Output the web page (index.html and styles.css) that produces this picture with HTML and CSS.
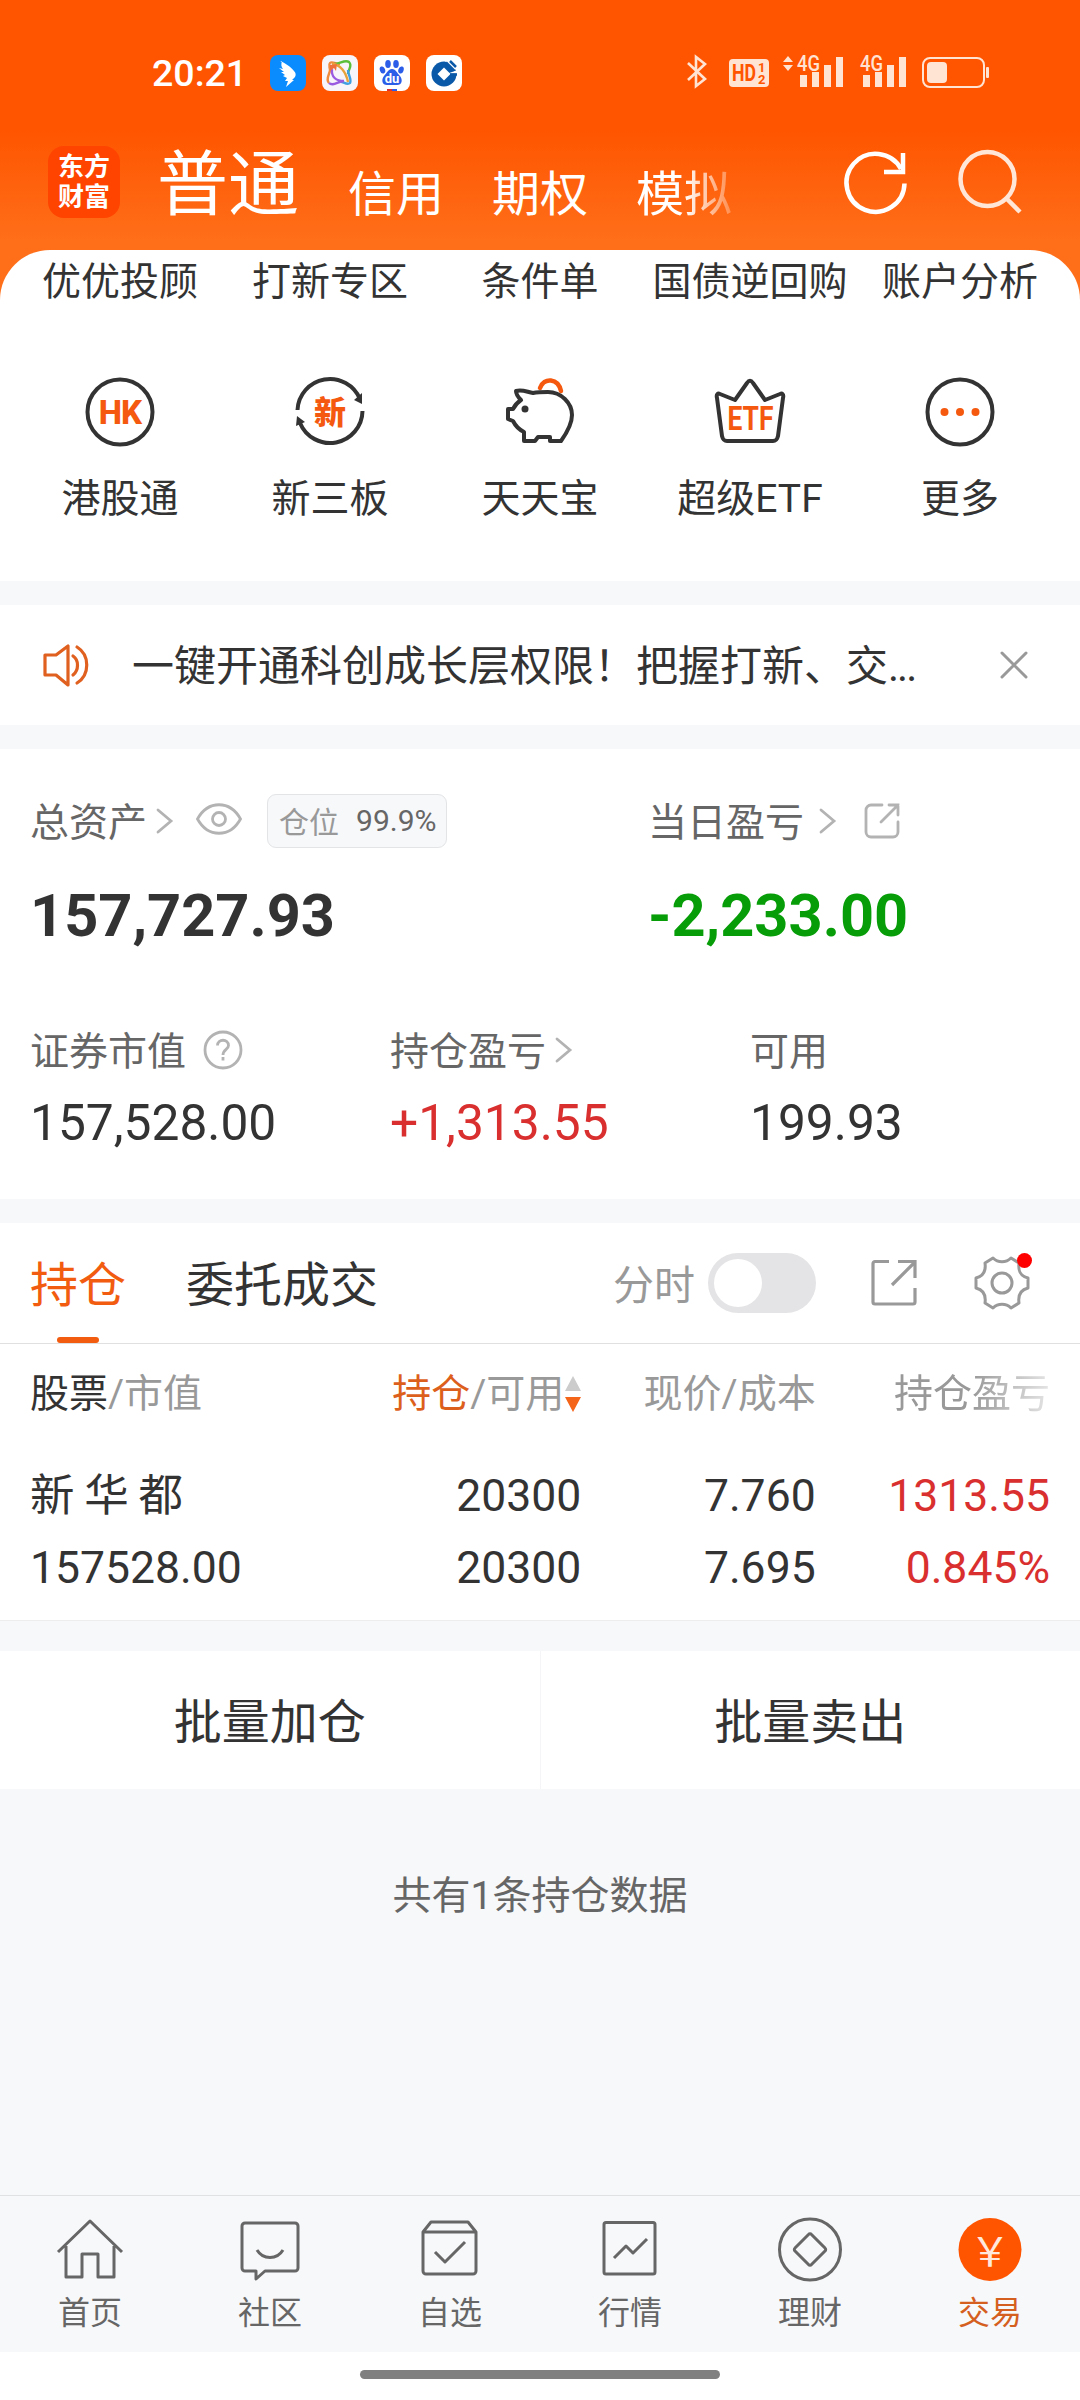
FILE: index.html
```html
<!DOCTYPE html>
<html lang="zh-CN">
<head>
    <meta charset="UTF-8">
    <meta name="viewport" content="width=device-width, initial-scale=1.0">
    <title>交易</title>
    <link rel="stylesheet" href="styles.css">
</head>
<body>
    <div class="header">
        <!-- 状态栏 -->
        <div class="status-bar">
            <span class="time">20:21</span>
            <div class="app-icons">
                <svg width="36" height="36" viewBox="0 0 36 36">
                    <rect width="36" height="36" rx="8" fill="#0a8cff"/>
                    <path d="M10 6c5 2 11 6 14 10 2 2 2 4 1 6l-3 3h2l-8 7 2-6h-3l2-3-4-2 2-1-4-3 3 0-5-4 4 1c-2-2-2-5-1-8z" fill="#fff"/>
                </svg>
                <svg width="36" height="36" viewBox="0 0 36 36" fill="none" stroke-width="2.4">
                    <rect width="36" height="36" rx="8" fill="#f7f5fa"/>
                    <path d="M7 28c-4-4 1-9 1-13 0-3-2-5 0-7s5 1 10 1" stroke="#f08a3c"/>
                    <path d="M12 9c6 0 11-5 15-2 4 4-1 7-1 12" stroke="#5cbf3a"/>
                    <path d="M10 9c8 0 14 8 16 18" stroke="#e8a23a"/>
                    <path d="M26 15c0 5 4 9 2 13-3 3-7-2-12-2" stroke="#3f9fe0"/>
                    <path d="M10 14c-1 8 4 12 12 12M22 26c-6 0-11 6-15 2" stroke="#9a5be0"/>
                    <path d="M8 10l7-1-1 7-2-3-4 3z" fill="#f0703c"/>
                </svg>
                <svg width="36" height="36" viewBox="0 0 36 36">
                    <rect width="36" height="36" rx="8" fill="#fff"/>
                    <g fill="#2b5de8">
                        <ellipse cx="14" cy="9" rx="2.8" ry="4"/>
                        <ellipse cx="22" cy="9" rx="2.8" ry="4"/>
                        <ellipse cx="8.5" cy="15" rx="2.6" ry="3.6" transform="rotate(-20 8.5 15)"/>
                        <ellipse cx="27" cy="15" rx="2.6" ry="3.6" transform="rotate(20 27 15)"/>
                        <path d="M18 14c4 0 5 4 8 7 3 4 2 9-3 9H13c-5 0-6-5-3-9 3-3 4-7 8-7z"/>
                    </g>
                    <text x="18" y="28" text-anchor="middle" class="du">du</text>
                    <path d="M13 35h5" stroke="#e03030" stroke-width="2"/>
                    <path d="M18 35h5" stroke="#2b5de8" stroke-width="2"/>
                </svg>
                <svg width="36" height="36" viewBox="0 0 36 36">
                    <rect width="36" height="36" rx="8" fill="#fff"/>
                    <circle cx="18" cy="19" r="12.5" fill="#0a59a8"/>
                    <path d="M18 12.5l6.500 6.500-6.500 6.500-6.500-6.500z" fill="#fff"/>
                    <path d="M22 18.500h11v-4h-5L19 6h9l6 8" fill="#fff"/>
                    <path d="M20 7.500l8 8M24 6l6 6" stroke="#0a59a8" stroke-width="2.500"/>
                    <path d="M24 19.500h7" stroke="#0a59a8" stroke-width="2.500"/>
                </svg>
            </div>
            <svg class="system-icons" width="306" height="48" viewBox="0 -6 306 48" fill="#ffe3d3">
                <path d="M2 9l17 16-9 7V3l9 7L2 26" fill="none" stroke="#ffe3d3" stroke-width="2.600"/>
                <rect x="43" y="5" width="40" height="28" rx="4"/>
                <text x="46" y="27" class="hd" textLength="24" lengthAdjust="spacingAndGlyphs">HD</text>
                <text x="72" y="18" class="hd-num">1</text>
                <text x="72" y="30" class="hd-num">2</text>
                <path d="M97 8l5-6 5 6zM97 11l5 6 5-6z"/>
                <text x="111" y="17" class="net" textLength="23" lengthAdjust="spacingAndGlyphs">4G</text>
                <path d="M114 21h7v12h-7zM126 18h7v15h-7zM138 11h7v22h-7zM150 3h7v30h-7z"/>
                <text x="174" y="17" class="net" textLength="23" lengthAdjust="spacingAndGlyphs">4G</text>
                <path d="M177 21h7v12h-7zM189 18h7v15h-7zM201 11h7v22h-7zM213 3h7v30h-7z"/>
                <rect x="237" y="4" width="61" height="29" rx="7" fill="none" stroke="#ffe3d3" stroke-width="2"/>
                <rect x="241" y="8" width="20" height="21" rx="4"/>
                <rect x="300" y="13" width="3" height="11" rx="1"/>
            </svg>
        </div>

        <!-- 账户切换 -->
        <div class="account-nav">
            <div class="logo"><span>东方</span><span>财富</span></div>
            <div class="account-tabs">
                <span class="active">普通</span>
                <span>信用</span>
                <span>期权</span>
                <span class="fade">模拟</span>
            </div>
            <svg class="refresh" width="64" height="64" viewBox="0 0 64 64" fill="none" stroke="#fff" stroke-width="4.500">
                <path d="M60.500 32.500A29 29 0 1 1 57 18"/>
                <path d="M59 2v19H40"/>
            </svg>
            <svg class="search" width="64" height="64" viewBox="0 0 64 64" fill="none" stroke="#ffe6d6" stroke-width="4.500">
                <circle cx="29.500" cy="30" r="27"/>
                <path d="M48 49l14 14"/>
            </svg>
        </div>
    </div>

    <!-- 快捷入口 -->
    <div class="shortcuts">
        <div class="shortcut-row labels">
            <span>优优投顾</span>
            <span>打新专区</span>
            <span>条件单</span>
            <span>国债逆回购</span>
            <span>账户分析</span>
        </div>
        <div class="shortcut-row">
            <div class="shortcut">
                <svg width="76" height="76" viewBox="0 0 76 76">
                    <circle cx="38" cy="38" r="32.500" class="line"/>
                    <text x="38" y="50" text-anchor="middle" class="mark hk">HK</text>
                </svg>
                <span>港股通</span>
            </div>
            <div class="shortcut">
                <svg width="76" height="76" viewBox="0 0 76 76">
                    <path d="M5.500 36A32.500 32.500 0 0 1 68 25M70.500 37A32.500 32.500 0 0 1 8 49" class="line"/>
                    <path d="M70 19v11l-8-4zM5 42l-1 10 9-4z" fill="#333"/>
                    <text x="38" y="50" text-anchor="middle" class="mark xin">新</text>
                </svg>
                <span>新三板</span>
            </div>
            <div class="shortcut">
                <svg width="76" height="76" viewBox="0 0 76 76">
                    <path d="M38 14c4-11 18-10 21 3" fill="none" stroke="#f4590f" stroke-width="4.500" stroke-linecap="round"/>
                    <path d="M14 17c6-2 11 1 17 2 5-1 10-1 15-1 13 0 24 11 24 23 0 10-6 19-11 26H48v-4H36l-3 4H22v-9c-6-3-9-7-11-11l-5-2v-10h5c2-4 5-7 8-9-3-3-5-6-5-9z" class="line"/>
                    <circle cx="23" cy="35" r="3.500" fill="#333"/>
                </svg>
                <span>天天宝</span>
            </div>
            <div class="shortcut">
                <svg width="76" height="76" viewBox="0 0 76 76">
                    <path d="M5 24c-1-4 1-5 3-4l15 6 12-17c2-3 4-3 6 0l12 17 15-6c2-1 4 0 3 4l-5 38c-1 4-2 5-5 5H15c-3 0-4-1-5-5z" class="line"/>
                    <text x="15.500" y="55.500" textLength="46" lengthAdjust="spacingAndGlyphs" class="mark etf">ETF</text>
                </svg>
                <span>超级ETF</span>
            </div>
            <div class="shortcut">
                <svg width="76" height="76" viewBox="0 0 76 76">
                    <circle cx="38" cy="38" r="32.500" class="line"/>
                    <g fill="#f4590f">
                        <circle cx="22.500" cy="38" r="4"/>
                        <circle cx="38" cy="38" r="4"/>
                        <circle cx="53.500" cy="38" r="4"/>
                    </g>
                </svg>
                <span>更多</span>
            </div>
        </div>
    </div>

    <!-- 公告 -->
    <div class="notice">
        <svg width="48" height="44" viewBox="0 0 48 44" fill="none" stroke="#e0601f" stroke-width="3.200" stroke-linejoin="round" stroke-linecap="round">
            <path d="M3 12h11l12-9v39l-12-10H3z"/>
            <path d="M31 13c6 4 6 14 0 19M35 4c13 8 13 28 0 36"/>
        </svg>
        <p>一键开通科创成长层权限！把握打新、交<span class="dots">...</span></p>
        <svg width="28" height="28" viewBox="0 0 28 28" fill="none" stroke="#999" stroke-width="3" stroke-linecap="round">
            <path d="M2 2l24 24M26 2L2 26"/>
        </svg>
    </div>

    <!-- 资产 -->
    <div class="assets">
        <div class="asset-top">
            <div class="asset-main">
                <div class="label">
                    <span>总资产</span>
                    <svg class="chevron" width="17" height="26" viewBox="0 0 17 26"><path d="M2 2l13 11L2 24"/></svg>
                    <svg class="eye" width="46" height="32" viewBox="0 0 46 32" fill="none" stroke="#b3b3b3" stroke-width="2.800">
                        <path d="M1.500 16C12-3 34-3 44.500 16 34 35 12 35 1.500 16z"/>
                        <circle cx="23" cy="16" r="6.500"/>
                    </svg>
                    <div class="ratio">仓位<b>99.9%</b></div>
                </div>
                <div class="total">157,727.93</div>
            </div>
            <div class="asset-today">
                <div class="label">
                    <span>当日盈亏</span>
                    <svg class="chevron wide" width="17" height="26" viewBox="0 0 17 26"><path d="M2 2l13 11L2 24"/></svg>
                    <svg class="share" width="36" height="36" viewBox="0 0 36 36" fill="none" stroke="#b3b3b3" stroke-width="2.800" stroke-linecap="round">
                        <path d="M18 2H7a5 5 0 0 0-5 5v22a5 5 0 0 0 5 5h22a5 5 0 0 0 5-5V19"/>
                        <path d="M25 2h9v10M34 2L17 19"/>
                    </svg>
                </div>
                <div class="total down">-2,233.00</div>
            </div>
        </div>
        <div class="asset-bottom">
            <div>
                <div class="label">
                    <span>证券市值</span>
                    <svg class="help" width="40" height="40" viewBox="0 0 40 40" fill="none" stroke="#b3b3b3" stroke-width="2.800">
                        <circle cx="20" cy="20" r="18"/>
                        <path d="M14.500 15.500c0-7 11-7 11 0 0 4-5.500 4-5.500 9.500M20 27v3.500"/>
                    </svg>
                </div>
                <div class="value">157,528.00</div>
            </div>
            <div>
                <div class="label">
                    <span>持仓盈亏</span>
                    <svg class="chevron" width="17" height="26" viewBox="0 0 17 26"><path d="M2 2l13 11L2 24"/></svg>
                </div>
                <div class="value up">+1,313.55</div>
            </div>
            <div>
                <div class="label"><span>可用</span></div>
                <div class="value">199.93</div>
            </div>
        </div>
    </div>

    <!-- 持仓列表 -->
    <div class="positions">
        <div class="position-tabs">
            <span class="tab active">持仓</span>
            <span class="tab">委托成交</span>
            <span class="switch-label">分时</span>
            <span class="switch"></span>
            <svg class="export" width="48" height="48" viewBox="0 0 48 48" fill="none" stroke="#999" stroke-width="3.200">
                <path d="M19 2.500H5a2 2 0 0 0-2 2V43a2 2 0 0 0 2 2h38a2 2 0 0 0 2-2V29"/>
                <path d="M28 2.500h17V19M44 4L22 26"/>
            </svg>
            <div class="settings">
                <svg width="56" height="56" viewBox="0 0 56 56" fill="none" stroke="#999" stroke-width="3" stroke-linejoin="round">
                    <path d="M19 3c5 5 13 5 18 0l8 5c-1 8 1 13 9 15v10c-8 2-10 8-9 15l-8 5c-5-5-13-5-18 0l-8-5c1-7-1-13-9-15V23c8-2 10-8 9-15z"/>
                    <circle cx="28" cy="28" r="10"/>
                </svg>
                <i class="dot"></i>
            </div>
        </div>
        <table>
            <thead>
                <tr>
                    <th><b>股票</b>/市值</th>
                    <th class="sorted"><em>持仓</em>/可用<svg width="16" height="36" viewBox="0 0 16 36"><path d="M8 0l8 15H0z" fill="#ccc"/><path d="M8 36l8-15H0z" fill="#f4651a"/></svg></th>
                    <th>现价/成本</th>
                    <th><span class="fade">持仓盈亏</span></th>
                </tr>
            </thead>
            <tbody>
                <tr>
                    <td>新 华 都<br>157528.00</td>
                    <td>20300<br>20300</td>
                    <td>7.760<br>7.695</td>
                    <td class="up">1313.55<br>0.845%</td>
                </tr>
            </tbody>
        </table>
    </div>

    <div class="batch">
        <div>批量加仓</div>
        <div>批量卖出</div>
    </div>
    <p class="summary">共有1条持仓数据</p>

    <!-- 底部导航 -->
    <div class="tab-bar">
        <div class="tab-item">
            <svg width="66" height="66" viewBox="0 0 66 66">
                <path d="M1 34L33 3l32 31M9 28v31h16V36h16v23h16V28"/>
            </svg>
            <span>首页</span>
        </div>
        <div class="tab-item">
            <svg width="66" height="66" viewBox="0 0 66 66">
                <path d="M8 5h50a3 3 0 0 1 3 3v42a3 3 0 0 1-3 3H28l-9 8v-8H8a3 3 0 0 1-3-3V8a3 3 0 0 1 3-3z"/>
                <path d="M20 32c6 10 20 10 26 0"/>
            </svg>
            <span>社区</span>
        </div>
        <div class="tab-item">
            <svg width="66" height="66" viewBox="0 0 66 66">
                <path d="M6 14l8-10h37l8 10v39a3 3 0 0 1-3 3H9a3 3 0 0 1-3-3zM6 14h53M18 34l10 10 20-20"/>
            </svg>
            <span>自选</span>
        </div>
        <div class="tab-item">
            <svg width="66" height="66" viewBox="0 0 66 66">
                <rect x="7" y="4.500" width="51" height="51.500" rx="2"/>
                <path d="M17 40l12-12 7 7 14-14"/>
            </svg>
            <span>行情</span>
        </div>
        <div class="tab-item">
            <svg width="66" height="66" viewBox="0 0 66 66">
                <circle cx="33" cy="31.500" r="30.500"/>
                <path d="M31.500 16.500a2 2 0 0 1 3 0l13.500 13.500a2 2 0 0 1 0 3L34.500 46.500a2 2 0 0 1-3 0L18 33a2 2 0 0 1 0-3z"/>
            </svg>
            <span>理财</span>
        </div>
        <div class="tab-item active">
            <svg width="66" height="66" viewBox="0 0 66 66">
                <circle cx="33" cy="31.500" r="31.500"/>
                <text x="33" y="48" text-anchor="middle">￥</text>
            </svg>
            <span>交易</span>
        </div>
    </div>
    <div class="home-indicator"></div>
</body>
</html>
```

FILE: styles.css
```css
* {
    box-sizing: border-box;
    margin: 0;
    padding: 0;
}
body {
    display: flex;
    flex-direction: column;
    width: 1080px;
    height: 2400px;
    overflow: hidden;
    font-family: Roboto, "Noto Sans CJK SC", sans-serif;
    background-color: #f7f8fa;
    color: #333;
}
svg {
    display: block;
    flex-shrink: 0;
    overflow: visible;
}
b, em, i, th {
    font-weight: normal;
    font-style: normal;
}

/* 顶部 */
.header {
    flex-shrink: 0;
    height: 310px;
    margin-bottom: -60px;
    background: linear-gradient(#ff5500 130px, #ff6e19 240px);
    color: #fff;
}
.status-bar {
    display: flex;
    align-items: center;
    height: 145px;
    padding: 0 88px 0 152px;
}
.time {
    width: 118px;
    font-size: 37.5px;
    font-weight: 500;
}
.app-icons {
    display: flex;
    gap: 16px;
}
.system-icons {
    margin: 0 0 2px auto;
}
.du {
    font-size: 13px;
    font-weight: bold;
    fill: #fff;
}
.hd {
    font-size: 24px;
    font-weight: 700;
    fill: #ff5500;
}
.hd-num {
    font-size: 13px;
    font-weight: 700;
    fill: #ff5500;
}
.net {
    font-size: 22px;
    font-weight: 500;
}
.account-nav {
    display: flex;
    height: 105px;
    padding-left: 48px;
}
.logo {
    display: flex;
    flex-direction: column;
    width: 72px;
    height: 72px;
    margin-top: 1px;
    padding-top: 6px;
    border-radius: 16px;
    background-color: #ff4400;
    font-size: 26px;
    font-weight: 700;
    line-height: 30px;
    text-align: center;
}
.account-tabs {
    display: flex;
    align-items: flex-start;
    gap: 48px;
    width: 640px;
    margin-left: 37px;
    font-size: 48px;
    line-height: 100px;
}
.account-tabs .active {
    font-size: 71px;
    line-height: 80px;
    margin-right: 1px;
}
.fade {
    -webkit-mask-image: linear-gradient(90deg, #000 50%, rgba(0, 0, 0, 0.25));
    mask-image: linear-gradient(90deg, #000 50%, rgba(0, 0, 0, 0.25));
}
.refresh {
    margin: 6px 0 0 47px;
}
.search {
    margin: 4px 0 0 50px;
}

/* 快捷入口 */
.shortcuts {
    flex-shrink: 0;
    height: 331px;
    padding: 0 15px;
    border-radius: 50px 50px 0 0;
    background-color: #fff;
    font-size: 39px;
}
.shortcut-row {
    display: grid;
    grid-template-columns: repeat(5, 210px);
    text-align: center;
    white-space: nowrap;
}
.labels {
    height: 124px;
    line-height: 64px;
}
.labels span {
    justify-self: center;
}
.shortcut {
    display: flex;
    flex-direction: column;
    align-items: center;
    gap: 23px;
    line-height: 52px;
}
.line {
    fill: none;
    stroke: #333;
    stroke-width: 4;
    stroke-linejoin: round;
}
.mark {
    font-weight: 700;
    fill: #f4590f;
}
.hk {
    font-size: 33px;
    font-weight: 800;
    letter-spacing: -1px;
}
.xin {
    font-size: 32px;
    font-weight: 900;
}
.etf {
    font-size: 34px;
}

/* 公告 */
.notice {
    display: flex;
    flex-shrink: 0;
    align-items: center;
    height: 120px;
    margin-top: 24px;
    padding: 0 52px 0 42px;
    background-color: #fff;
}
.notice p {
    flex: 1;
    margin-left: 42px;
    padding-top: 4px;
    font-size: 42px;
    line-height: 60px;
    white-space: nowrap;
}
.dots {
    letter-spacing: -2px;
}

/* 资产 */
.assets {
    flex-shrink: 0;
    height: 450px;
    margin-top: 24px;
    padding: 45px 30px 0;
    background-color: #fff;
}
.asset-top {
    display: flex;
    height: 229px;
}
.asset-main {
    width: 618px;
}
.label {
    display: flex;
    align-items: center;
    height: 54px;
    font-size: 39px;
    color: #666;
}
.label > span {
    padding-bottom: 4px;
}
.chevron {
    margin-left: 9px;
    fill: none;
    stroke: #b3b3b3;
    stroke-width: 2.8;
    stroke-linecap: round;
}
.chevron.wide {
    margin-left: 15px;
}
.eye {
    margin: 0 0 4px 23px;
}
.ratio {
    display: flex;
    align-items: center;
    gap: 17px;
    width: 180px;
    height: 54px;
    margin-left: 25px;
    padding: 0 0 2px 11px;
    border: 1px solid #e3e4e6;
    border-radius: 9px;
    background-color: #f7f8fa;
    color: #999;
    font-size: 30px;
}
.ratio b {
    color: #666;
}
.share {
    margin-left: 28px;
}
.total {
    margin-top: 32px;
    font-size: 59.5px;
    font-weight: 700;
    line-height: 72px;
}
.asset-bottom {
    display: flex;
}
.asset-bottom > div {
    flex: 0 0 360px;
}
.asset-bottom > div:last-child {
    flex: 1;
}
.help {
    margin-left: 17px;
}
.value {
    margin-top: 16px;
    font-size: 49.7px;
    line-height: 60px;
}
.up {
    color: #d9302f;
}
.down {
    color: #079d08;
}

/* 持仓列表 */
.positions {
    flex-shrink: 0;
    height: 398px;
    margin-top: 24px;
    border-bottom: 1px solid #ededee;
    background-color: #fff;
}
.position-tabs {
    display: flex;
    align-items: center;
    height: 121px;
    padding: 0 50px 0 30px;
    border-bottom: 1px solid #e0e0e0;
}
.tab {
    position: relative;
    margin-right: 60px;
    padding-bottom: 5px;
    font-size: 48px;
}
.tab.active {
    color: #f25c10;
}
.tab.active::after {
    content: "";
    position: absolute;
    left: 27px;
    bottom: -22px;
    width: 42px;
    height: 6px;
    border-radius: 3px;
    background-color: #f25c10;
}
.switch-label {
    margin-left: auto;
    padding-bottom: 2px;
    color: #999;
    font-size: 41px;
}
.switch {
    width: 108px;
    height: 60px;
    margin-left: 13px;
    padding: 6px;
    border-radius: 30px;
    background-color: #e4e4e6;
}
.switch::before {
    content: "";
    display: block;
    width: 48px;
    height: 48px;
    border-radius: 50%;
    background-color: #fff;
}
.export {
    margin-left: 54px;
}
.settings {
    position: relative;
    margin-left: 56px;
}
.dot {
    position: absolute;
    top: -2px;
    right: -2px;
    width: 15px;
    height: 15px;
    border-radius: 50%;
    background-color: #f00;
}
table {
    width: 1020px;
    margin: 0 30px;
    border-collapse: collapse;
    table-layout: fixed;
}
th {
    height: 98px;
    padding-bottom: 6px;
    color: #999;
    font-size: 39px;
    text-align: right;
    white-space: nowrap;
}
th:first-child, td:first-child {
    width: 317px;
    text-align: left;
}
th b {
    color: #333;
}
th em {
    color: #dd5f1c;
}
.sorted svg {
    display: inline-block;
    margin-left: 1px;
    vertical-align: -5px;
}
th .fade {
    display: inline-block;
}
td {
    padding-top: 18px;
    font-size: 44.5px;
    line-height: 72px;
    text-align: right;
    word-spacing: -1.3px;
}

/* 批量操作 */
.batch {
    display: flex;
    flex-shrink: 0;
    height: 138px;
    margin-top: 30px;
    background-color: #fff;
    font-size: 48px;
    line-height: 143px;
    text-align: center;
}
.batch div {
    flex: 1;
}
.batch div:first-child {
    border-right: 1px solid #f5f5f7;
}
.summary {
    margin-top: 80px;
    color: #666;
    font-size: 39px;
    line-height: 55px;
    text-align: center;
}

/* 底部导航 */
.tab-bar {
    display: flex;
    flex-shrink: 0;
    height: 157px;
    margin-top: auto;
    border-top: 1px solid #dfe1e3;
    background-color: #f7f8fa;
}
.tab-item {
    display: flex;
    flex-direction: column;
    align-items: center;
    width: 180px;
    padding-top: 22px;
    color: #666;
    font-size: 32px;
    line-height: 59px;
}
.tab-item svg {
    fill: none;
    stroke: #666;
    stroke-width: 3;
    stroke-linejoin: round;
}
.tab-item.active {
    color: #d45f1e;
}
.tab-item.active circle {
    fill: #ff5500;
    stroke: none;
}
.tab-item text {
    font-family: "Noto Sans CJK SC", sans-serif;
    font-size: 40px;
    line-height: 1;
    fill: #ffe9dc;
    stroke: none;
}
.home-indicator {
    flex-shrink: 0;
    height: 48px;
    padding: 18px 360px 0;
    background-color: #fff;
}
.home-indicator::before {
    content: "";
    display: block;
    height: 9px;
    border-radius: 5px;
    background-color: #808080;
}
```
